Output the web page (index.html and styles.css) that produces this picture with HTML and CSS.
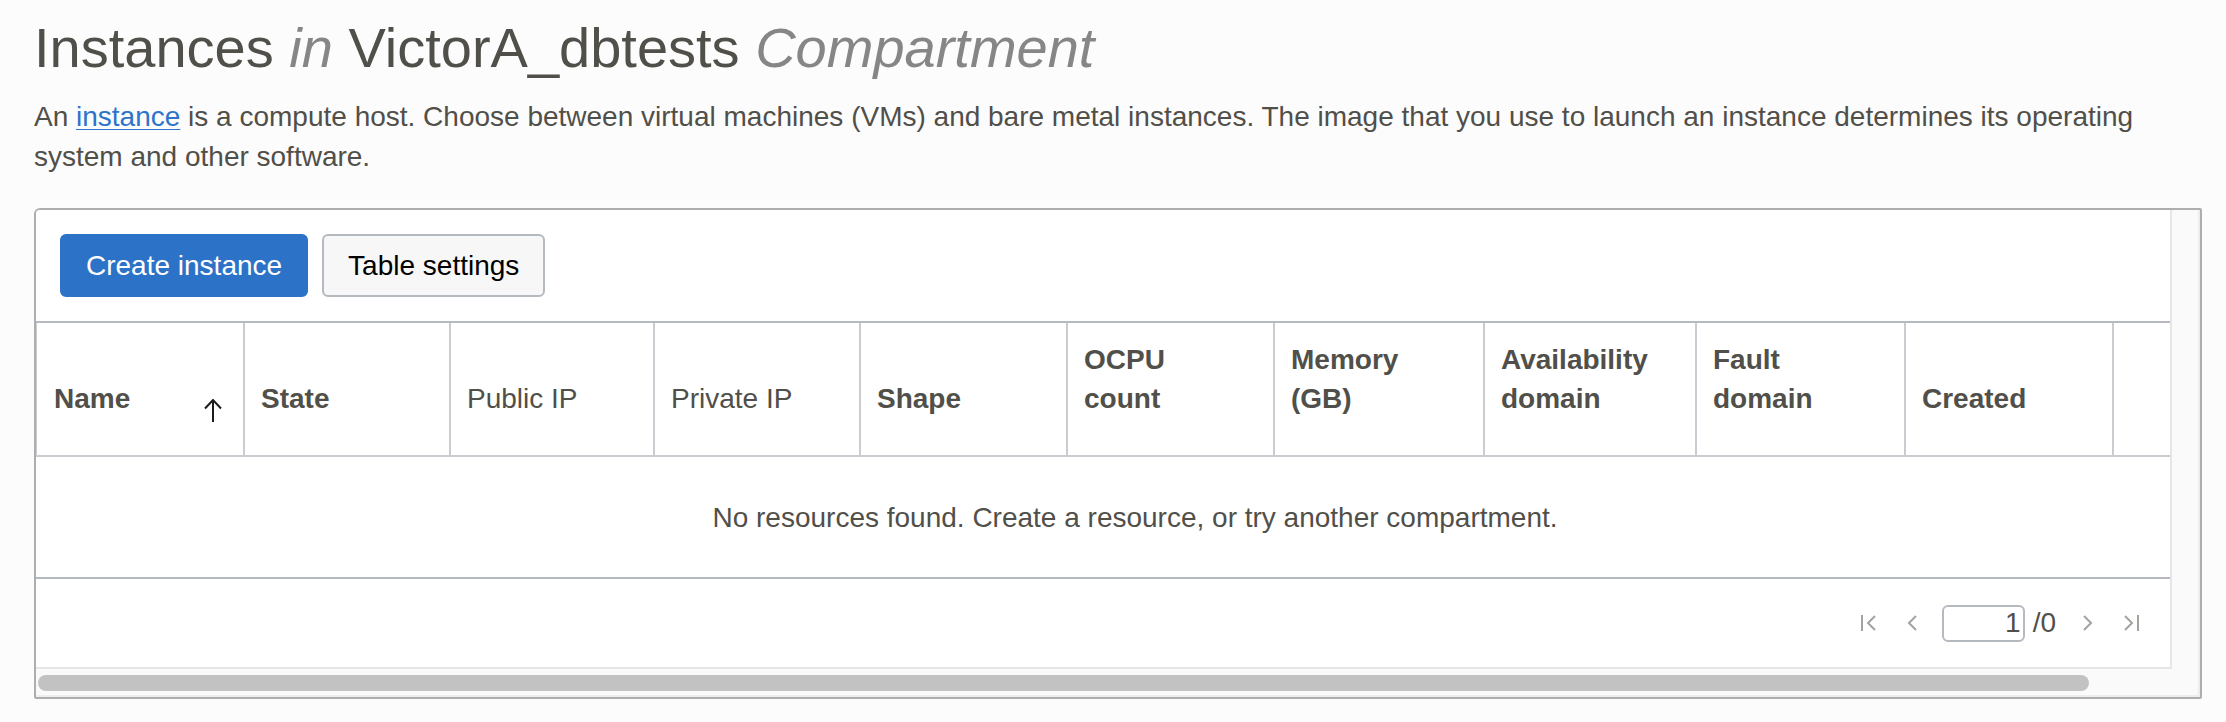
FILE: index.html
```html
<!DOCTYPE html>
<html lang="en">
<head>
<meta charset="utf-8">
<title>Instances</title>
<link rel="stylesheet" href="styles.css">
</head>
<body>
<main class="page">
  <h1 class="title">Instances <em class="title-note">in</em> VictorA_dbtests <em class="title-note">Compartment</em></h1>
  <p class="intro">An <a class="intro-link" href="#instance">instance</a> is a compute host. Choose between virtual machines (VMs) and bare metal instances. The image that you use to launch an instance determines its operating system and other software.</p>

  <section class="frame" aria-label="Instances">
    <div class="content">
      <div class="toolbar">
        <button class="button button-primary" type="button">Create instance</button>
        <button class="button" type="button">Table settings</button>
      </div>
      <table class="grid">
        <colgroup>
          <col class="col-name"><col class="col-state"><col class="col-public"><col class="col-private"><col class="col-shape"><col class="col-ocpu"><col class="col-memory"><col class="col-availability"><col class="col-fault"><col class="col-created"><col class="col-actions">
        </colgroup>
        <thead>
          <tr>
            <th scope="col" aria-sort="ascending">
              <div class="sortable">Name
                <svg class="sort-icon" width="18" height="23" viewBox="0 0 18 23" aria-hidden="true"><path d="M9 23V1M1 9.500L9 1L17 9.500"/></svg>
              </div>
            </th>
            <th scope="col">State</th>
            <th scope="col" class="plain">Public IP</th>
            <th scope="col" class="plain">Private IP</th>
            <th scope="col">Shape</th>
            <th scope="col">OCPU<br>count</th>
            <th scope="col">Memory<br>(GB)</th>
            <th scope="col">Availability<br>domain</th>
            <th scope="col">Fault<br>domain</th>
            <th scope="col">Created</th>
            <td class="head-empty"></td>
          </tr>
        </thead>
        <tbody>
          <tr><td class="empty" colspan="11">No resources found. Create a resource, or try another compartment.</td></tr>
        </tbody>
      </table>
      <nav class="pager" aria-label="Pagination">
        <button class="pager-button" type="button" aria-label="First page" disabled><svg width="16" height="18" viewBox="0 0 16 18"><path d="M2 1V17M15 2L8 9L15 16"/></svg></button>
        <button class="pager-button" type="button" aria-label="Previous page" disabled><svg width="10" height="18" viewBox="0 0 10 18"><path d="M9 2L2 9L9 16"/></svg></button>
        <label class="pager-page"><input class="pager-input" type="text" value="1" aria-label="Page"><span>/0</span></label>
        <button class="pager-button" type="button" aria-label="Next page" disabled><svg width="10" height="18" viewBox="0 0 10 18"><path d="M1 2L8 9L1 16"/></svg></button>
        <button class="pager-button" type="button" aria-label="Last page" disabled><svg width="16" height="18" viewBox="0 0 16 18"><path d="M14 1V17M1 2L8 9L1 16"/></svg></button>
      </nav>
    </div>
    <div class="scrollbar"><div class="scrollbar-thumb"></div></div>
  </section>
</main>
</body>
</html>
```
FILE: styles.css
```css
* {
  box-sizing: border-box;
}

body {
  margin: 0;
  background: #fcfcfc;
  color: #514f49;
  font-family: "Liberation Sans", Arial, sans-serif;
  font-size: 28px;
  line-height: 40px;
}

button,
input {
  font: inherit;
}

.page {
  padding: 14px 24px 24px 34px;
}

.title {
  margin: 0 0 15px;
  font-size: 56px;
  font-weight: 400;
  line-height: 68px;
}

.title-note {
  color: #868686;
}

.intro {
  margin: 0 24px 31px 0;
}

.intro-link {
  color: #2c75ca;
  text-decoration: underline;
  text-decoration-thickness: 1px;
  text-underline-offset: 3px;
}

.frame {
  background: #fafafa;
  border: 2px solid #aeaeae;
  border-radius: 6px 2px 2px 2px;
  box-shadow: inset -2px -2px 0 #ededed;
  padding: 0 2px 2px 0;
}

.content {
  margin-right: 26px;
  overflow: hidden;
  background: #fff;
  border-right: 2px solid #e6e6e6;
  border-bottom: 2px solid #e6e6e6;
  border-top-left-radius: 4px;
}

.toolbar {
  display: flex;
  gap: 14px;
  padding: 24px;
}

.button {
  height: 63px;
  padding: 1px 24px 0;
  border: 2px solid #b5bac1;
  border-radius: 6px;
  background: #f7f7f7;
  color: #000;
  line-height: 58px;
}

.button-primary {
  border-color: #2c73c8;
  background: #2c73c8;
  color: #fff;
}

.grid {
  width: 103%;
  table-layout: fixed;
  border-spacing: 0;
  border-top: 2px solid #b5b9c2;
}

.col-name { width: 209px; }
.col-state { width: 206px; }
.col-public { width: 204px; }
.col-private { width: 206px; }
.col-shape { width: 207px; }
.col-ocpu { width: 207px; }
.col-memory { width: 210px; }
.col-availability { width: 212px; }
.col-fault { width: 209px; }
.col-created { width: 208px; }
.col-actions { width: 120px; }

.grid th,
.head-empty {
  padding: 17px 16px 37px;
  border-right: 2px solid #c9ccd1;
  border-bottom: 2px solid #c9ccd1;
  font-weight: 700;
  line-height: 39px;
  text-align: left;
  vertical-align: bottom;
}

.grid th:first-child {
  border-left: 1px solid #c9ccd1;
}

.grid .plain {
  font-weight: 400;
}

.sortable {
  display: flex;
  align-items: flex-end;
  justify-content: space-between;
  padding: 0 5px 0 1px;
}

.sort-icon {
  margin-bottom: -4px;
  fill: none;
  stroke: #1c1c1c;
  stroke-width: 2;
}

.empty {
  height: 120px;
  padding: 2px 0 0;
  text-align: center;
}

.pager {
  display: flex;
  align-items: center;
  justify-content: flex-end;
  height: 90px;
  padding-right: 16px;
  border-top: 2px solid #b4b9bf;
}

.pager-button {
  display: flex;
  align-items: center;
  justify-content: center;
  width: 44px;
  height: 44px;
  padding: 0;
  border: 0;
  background: none;
}

.pager-button svg {
  fill: none;
  stroke: #a3a3a0;
  stroke-width: 2;
}

.pager-page {
  display: flex;
  align-items: center;
  gap: 8px;
  margin: 0 10px 0 8px;
}

.pager-input {
  width: 83px;
  height: 37px;
  padding: 0 2px;
  border: 2px solid #b5bac1;
  border-radius: 6px;
  background: #fff;
  color: inherit;
  text-align: right;
}

.scrollbar {
  margin-right: 26px;
  padding: 6px 2px 4px;
}

.scrollbar-thumb {
  width: 96.2%;
  height: 16px;
  border-radius: 8px;
  background: #c2c2c2;
}
```
